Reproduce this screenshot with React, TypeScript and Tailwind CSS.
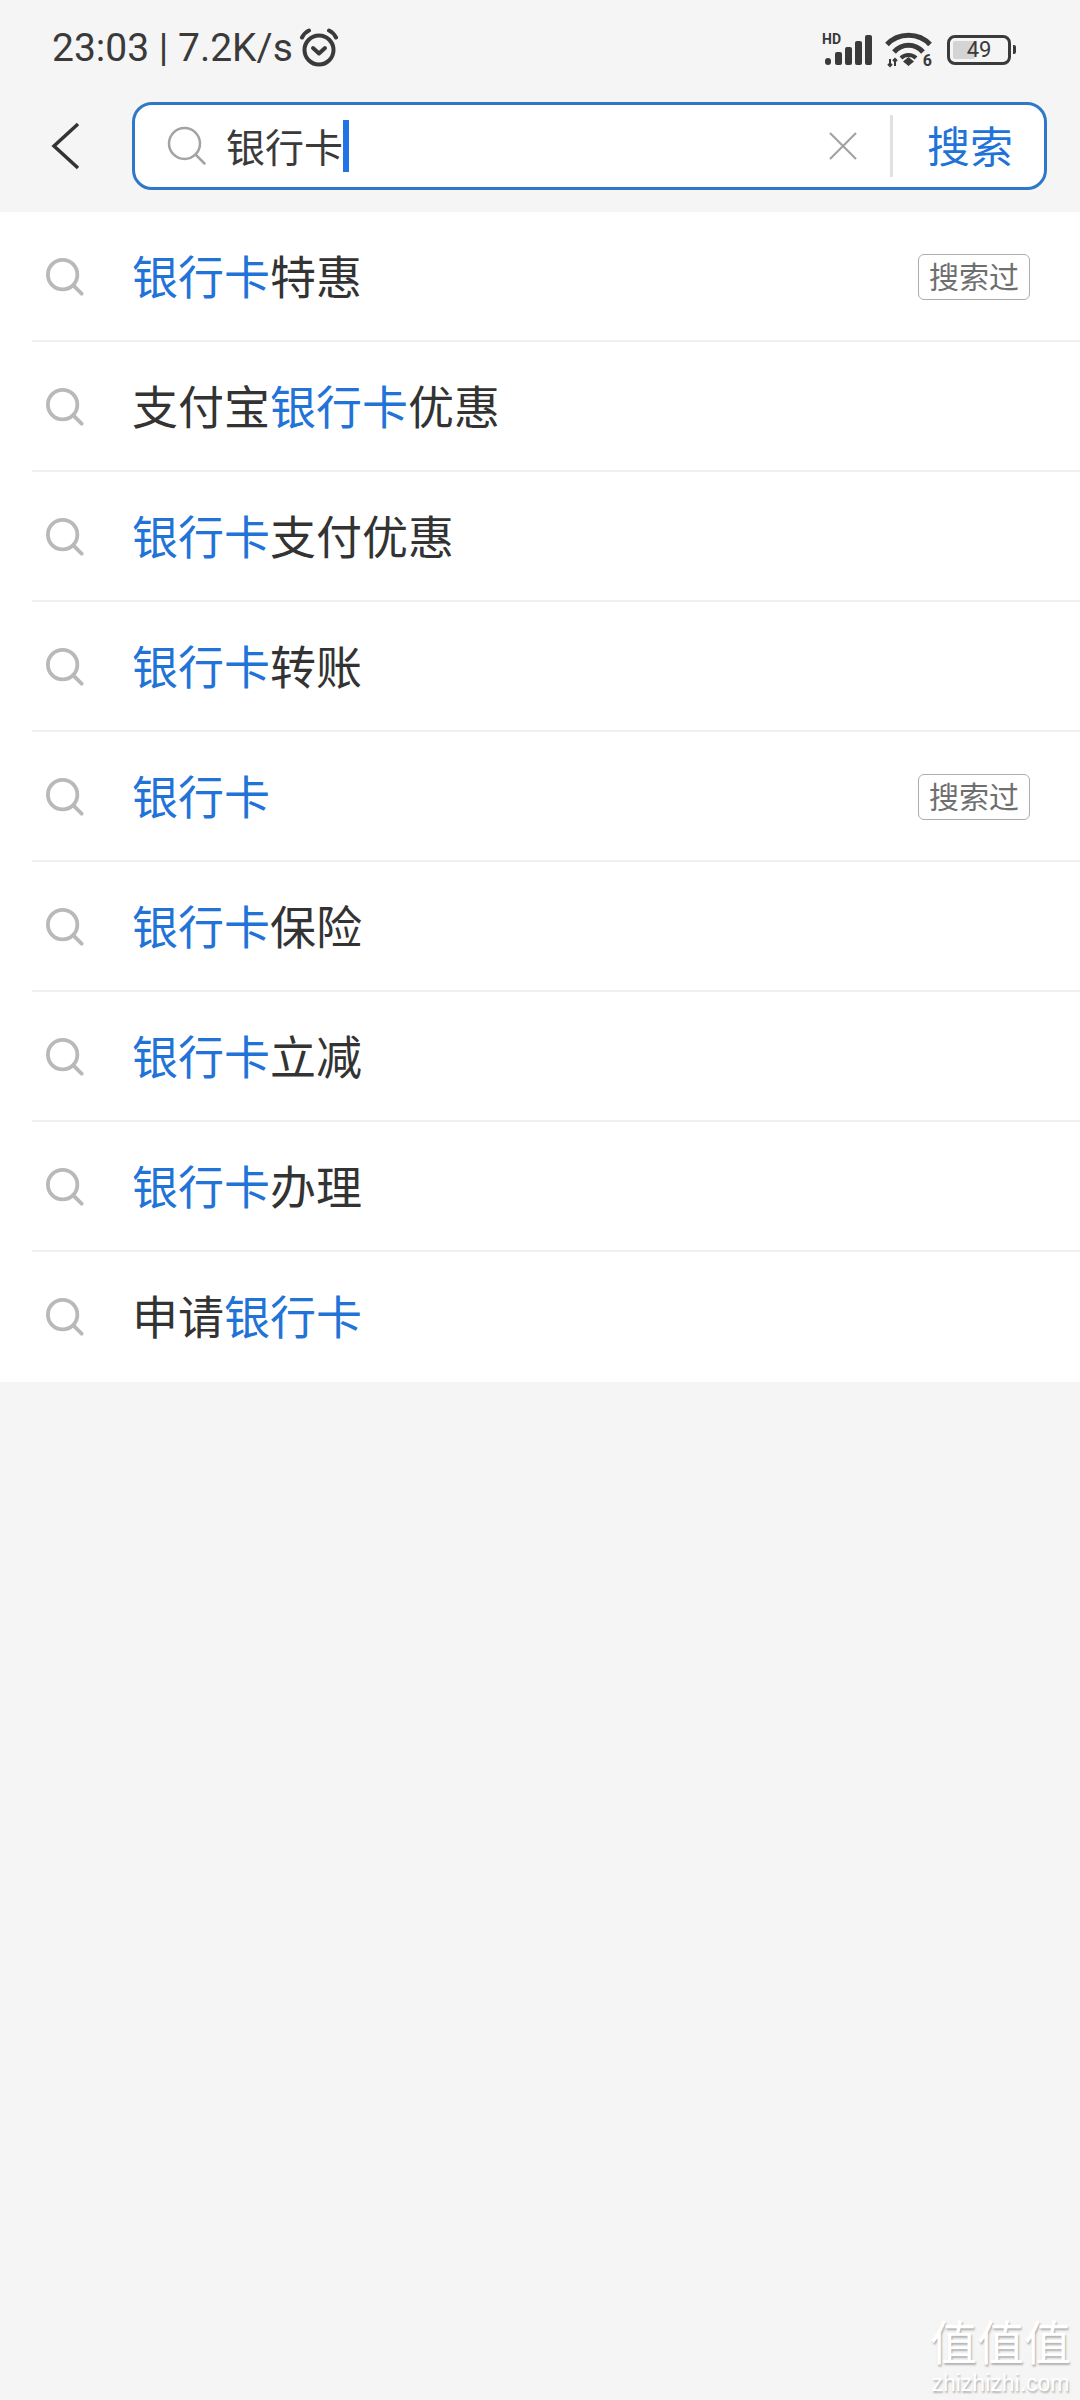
import React from "react";

const CJK = "font-['Noto_Sans_CJK_SC',sans-serif]";

function Lens({ className, color, sw }: { className: string; color: string; sw: number }) {
  return (
    <svg viewBox="0 0 40 40" className={className} fill="none" stroke={color} strokeWidth={sw} strokeLinecap="round">
      <circle cx="17.5" cy="17.5" r="15.5" />
      <path d="M29 29l8.5 8.5" />
    </svg>
  );
}

function Row({ parts, tag, last }: { parts: [string, boolean][]; tag?: boolean; last?: boolean }) {
  return (
    <div className="relative flex h-[130px] items-center pl-[46px] pr-[50px]">
      <Lens className="h-[38px] w-[38px] shrink-0" color="#b9b9b9" sw={4} />
      <div className="ml-[48px] flex-1 whitespace-nowrap pb-[7px] text-[46px] leading-none text-[#333333]">
        {parts.map(([t, hi], i) => (
          <span key={i} className={hi ? "text-[#2273d8]" : ""}>{t}</span>
        ))}
      </div>
      {tag && (
        <div className="flex h-[46px] w-[112px] items-center justify-center rounded-[6px] border border-[#adadad] pb-[4px] text-[30px] leading-none text-[#6f6f6f]">
          搜索过
        </div>
      )}
      {!last && <div className="absolute bottom-0 left-[32px] right-0 h-[2px] bg-[#efefef]" />}
    </div>
  );
}

const rows: { parts: [string, boolean][]; tag?: boolean }[] = [
  { parts: [["银行卡", true], ["特惠", false]], tag: true },
  { parts: [["支付宝", false], ["银行卡", true], ["优惠", false]] },
  { parts: [["银行卡", true], ["支付优惠", false]] },
  { parts: [["银行卡", true], ["转账", false]] },
  { parts: [["银行卡", true]], tag: true },
  { parts: [["银行卡", true], ["保险", false]] },
  { parts: [["银行卡", true], ["立减", false]] },
  { parts: [["银行卡", true], ["办理", false]] },
  { parts: [["申请", false], ["银行卡", true]] },
];

export default function App() {
  return (
    <div className={`relative h-[2400px] w-[1080px] overflow-hidden bg-[#f5f5f5] ${CJK}`}>
      <header className="h-[212px]">
        <div className="flex h-[102px] items-start justify-between pl-[52px] pr-[64px] pt-[28px] text-[#3a3a3a]">
          <div className="flex items-center font-['Roboto',sans-serif] text-[39px] leading-[40px]">
            <span className="whitespace-nowrap">23:03 | 7.2K/s</span>
            <svg viewBox="0 0 40 40" className="ml-[6px] h-[40px] w-[40px]" fill="none" stroke="#3a3a3a" strokeWidth="4" strokeLinecap="round" strokeLinejoin="round">
              <circle cx="20" cy="22" r="14.5" />
              <path d="M14 20l6 5.500 6-5.500" />
              <path d="M3 9.500Q5.500 4.500 10 2.500M37 9.500Q34.500 4.500 30 2.500" />
            </svg>
          </div>
          <div className="flex items-center pt-[3px]">
            <div className="relative h-[32px] w-[50px]">
              <span className="absolute left-0 top-[-2px] font-['Roboto',sans-serif] text-[14px] font-bold leading-[14px]">HD</span>
              <svg viewBox="0 0 50 32" className="h-[32px] w-[50px]" fill="#3a3a3a">
                <rect x="3" y="24" width="6" height="7" rx="3" />
                <rect x="13" y="18" width="7" height="13" rx="2" />
                <rect x="23" y="13" width="7" height="18" rx="2" />
                <rect x="33" y="7" width="7" height="24" rx="2" />
                <rect x="43" y="1" width="7" height="30" rx="2" />
              </svg>
            </div>
            <div className="relative ml-[13px] h-[37px] w-[47px]">
              <svg viewBox="0 0 47 37" className="h-[37px] w-[47px]" fill="none" stroke="#3a3a3a" strokeWidth="5">
                <path d="M2 13.500C13 1 34 1 45 13.500" />
                <path d="M9 21C17 12 30 12 38 21" />
                <path d="M16 27C20 23 27 23 31 27" strokeWidth="4" />
                <path d="M23.500 26l5.500 4.500-5.500 4.500-5.500-4.500z" fill="#3a3a3a" stroke="none" />
                <path d="M5 28v7M3 33l2 2 2-2M10 35v-7M8 30l2-2 2 2" strokeWidth="2" />
              </svg>
              <span className="absolute bottom-[-1px] right-0 font-['Roboto',sans-serif] text-[16px] font-bold leading-[16px]">6</span>
            </div>
            <div className="ml-[15px] flex items-center">
              <div className="relative flex h-[30px] w-[64px] items-center rounded-[8px] border-[3px] border-[#3a3a3a] p-[3px]">
                <div className="h-full w-[42%] rounded-[2px] bg-[#d4d4d4]" />
                <span className="absolute inset-0 text-center font-['Roboto',sans-serif] text-[22px] leading-[24px]">49</span>
              </div>
              <div className="ml-[2px] h-[9px] w-[3px] rounded-r-[2px] bg-[#3a3a3a]" />
            </div>
          </div>
        </div>
        <div className="flex items-center pl-[50px] pr-[33px]">
          <svg viewBox="0 0 30 48" className="h-[48px] w-[30px] shrink-0" fill="none" stroke="#333333" strokeWidth="3.500">
            <path d="M28 2L4 24l24 22" />
          </svg>
          <div className="ml-[52px] flex h-[88px] flex-1 items-center rounded-[20px] border-[3px] border-[#2f78c8] bg-white pl-[32px]">
            <Lens className="h-[40px] w-[40px] shrink-0" color="#a3a3a3" sw={2.500} />
            <span className="ml-[19px] whitespace-nowrap pb-[2px] text-[39px] leading-none text-[#3a3a3a]">银行卡</span>
            <div className="h-[52px] w-[6px] bg-[#2273e6]" />
            <div className="flex-1" />
            <svg viewBox="0 0 30 30" className="h-[30px] w-[30px] shrink-0" stroke="#a3a3a3" strokeWidth="2.200">
              <path d="M2 2l26 26M28 2L2 28" />
            </svg>
            <div className="ml-[32px] h-[62px] w-[3px] bg-[#e1e1e1]" />
            <span className="ml-[34px] mr-[31px] whitespace-nowrap pb-[4px] text-[43px] leading-none text-[#2273d8]">搜索</span>
          </div>
        </div>
      </header>
      <main className="bg-white">
        {rows.map((r, i) => (
          <Row key={i} parts={r.parts} tag={r.tag} last={i === rows.length - 1} />
        ))}
      </main>
      <div className="absolute bottom-[6px] right-[9px] flex flex-col items-center text-white [text-shadow:1px_2px_2px_rgba(0,0,0,0.28)]">
        <div className="text-[47px] leading-[47px]">值值值</div>
        <div className="mt-[9px] font-['Liberation_Sans',sans-serif] text-[23px] leading-[22px]">zhizhizhi.com</div>
      </div>
    </div>
  );
}
